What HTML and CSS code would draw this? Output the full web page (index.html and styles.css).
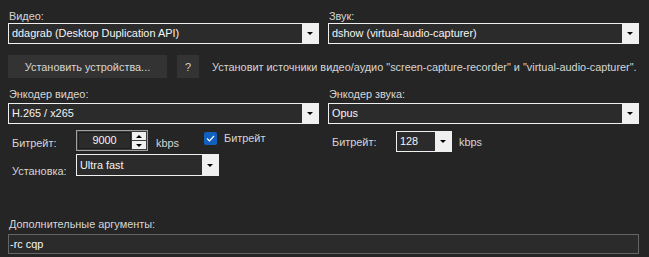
FILE: index.html
```html
<!DOCTYPE html>
<html lang="ru">
<head>
    <meta charset="UTF-8">
    <title>Настройки записи</title>
    <link rel="stylesheet" href="styles.css">
</head>
<body>
    <div class="panel">
        <div class="cols">
            <div class="field">
                <div class="label">Видео:</div>
                <div class="combo">
                    <span class="value">ddagrab (Desktop Duplication API)</span>
                    <span class="drop"><i class="arrow"></i></span>
                </div>
            </div>
            <div class="field">
                <div class="label">Звук:</div>
                <div class="combo">
                    <span class="value">dshow (virtual-audio-capturer)</span>
                    <span class="drop"><i class="arrow"></i></span>
                </div>
            </div>
        </div>

        <div class="devices">
            <button class="btn btn-devices">Установить устройства...</button>
            <button class="btn btn-help">?</button>
            <span class="hint">Установит источники видео/аудио "screen-capture-recorder" и "virtual-audio-capturer".</span>
        </div>

        <div class="cols encoders">
            <div class="field">
                <div class="label">Энкодер видео:</div>
                <div class="combo">
                    <span class="value">H.265 / x265</span>
                    <span class="drop"><i class="arrow"></i></span>
                </div>
                <div class="opt-row">
                    <span class="opt-label lbl-bitrate">Битрейт:</span>
                    <div class="spin">
                        <span class="spin-value">9000</span>
                        <span class="spin-btns">
                            <span class="spin-btn"><i class="arrow up"></i></span>
                            <span class="spin-btn"><i class="arrow"></i></span>
                        </span>
                    </div>
                    <span class="unit">kbps</span>
                    <span class="check">
                        <span class="box">
                            <svg width="9" height="7" viewBox="0 0 9 7"><path d="M1 3.5 L3.5 6 L8 1" fill="none" stroke="#fff" stroke-width="1.2"/></svg>
                        </span>
                        Битрейт
                    </span>
                </div>
                <div class="opt-row">
                    <span class="opt-label lbl-preset">Установка:</span>
                    <div class="combo preset">
                        <span class="value">Ultra fast</span>
                        <span class="drop"><i class="arrow"></i></span>
                    </div>
                </div>
            </div>
            <div class="field">
                <div class="label">Энкодер звука:</div>
                <div class="combo">
                    <span class="value">Opus</span>
                    <span class="drop"><i class="arrow"></i></span>
                </div>
                <div class="opt-row audio-row">
                    <span class="opt-label lbl-audio">Битрейт:</span>
                    <div class="combo small">
                        <span class="value">128</span>
                        <span class="drop"><i class="arrow"></i></span>
                    </div>
                    <span class="unit">kbps</span>
                </div>
            </div>
        </div>

        <div class="args">
            <div class="label">Дополнительные аргументы:</div>
            <div class="textbox">-rc cqp</div>
        </div>
    </div>
</body>
</html>
```

FILE: styles.css
```css
body {
    margin: 0;
    background-color: #252525;
    color: #d6d6d6;
    font-family: "Liberation Sans", Arial, sans-serif;
    font-size: 10.9px;
}
.panel {
    padding: 9px 10px 0 8px;
    width: 631px;
}
.cols {
    display: flex;
    gap: 9px;
}
.field {
    width: 311px;
    display: flex;
    flex-direction: column;
}
.label {
    height: 14px;
    line-height: 14px;
    padding-left: 1px;
}
.combo {
    display: flex;
    height: 21px;
    box-sizing: border-box;
    border: 1px solid #f0f0f0;
    background-color: #2b2b2b;
    color: #f4f4f4;
}
.combo .value {
    flex: 1;
    line-height: 19px;
    padding-left: 3px;
    white-space: nowrap;
}
.combo .drop {
    width: 16px;
    background-color: #f0f0f0;
    display: flex;
    align-items: center;
    justify-content: center;
}
.arrow {
    width: 0;
    height: 0;
    border-left: 3px solid transparent;
    border-right: 3px solid transparent;
    border-top: 3px solid #000;
}
.arrow.up {
    border-top: none;
    border-bottom: 3px solid #000;
}
.devices {
    display: flex;
    align-items: center;
    margin-top: 11px;
    height: 23px;
}
.btn {
    height: 23px;
    border: none;
    background-color: #333333;
    color: #d6d6d6;
    font-family: inherit;
    font-size: 10.9px;
    padding: 0;
}
.btn-devices {
    width: 159px;
}
.btn-help {
    width: 22px;
    margin-left: 10px;
}
.hint {
    margin-left: 13px;
    white-space: nowrap;
}
.encoders {
    margin-top: 9px;
}
.encoders .combo {
    margin-top: 2px;
}
.opt-row {
    display: flex;
    align-items: flex-start;
    margin-top: 6px;
}
.opt-row + .opt-row {
    margin-top: 3px;
}
.opt-label {
    width: 68px;
    padding-left: 4px;
    box-sizing: border-box;
    line-height: 14px;
}
.lbl-bitrate { margin-top: 6px; }
.lbl-preset { margin-top: 10px; }
.lbl-audio { margin-top: 4px; }
.encoders .opt-row .combo { margin-top: 0; }
.combo.preset {
    width: 143px;
    height: 22px;
}
.combo.preset .value { line-height: 20px; }
.combo.small {
    width: 56px;
}
.audio-row {
    margin-top: 7px;
}
.spin {
    display: flex;
    width: 72px;
    height: 21px;
    box-sizing: border-box;
    border: 1px solid #a0a0a0;
    padding: 1px;
    background-color: #3a3a3a;
}
.spin-value {
    flex: 1;
    background-color: #2b2b2b;
    border: 1px solid #1c1c1c;
    color: #f4f4f4;
    text-align: center;
    line-height: 15px;
}
.spin-btns {
    width: 14px;
    margin-left: 1px;
    display: flex;
    flex-direction: column;
    gap: 1px;
}
.spin-btn {
    flex: 1;
    background-color: #f0f0f0;
    display: flex;
    align-items: center;
    justify-content: center;
}
.unit {
    margin-left: 8px;
    line-height: 14px;
    margin-top: 6px;
}
.audio-row .unit {
    margin-top: 4px;
    margin-left: 7px;
}
.check {
    display: flex;
    align-items: center;
    margin-left: 25px;
    margin-top: 1px;
    gap: 7px;
    line-height: 14px;
}
.box {
    width: 13px;
    height: 13px;
    border-radius: 2px;
    background-color: #1160c0;
    display: flex;
    align-items: center;
    justify-content: center;
}
.args {
    margin-top: 39px;
}
.textbox {
    margin-top: 3px;
    height: 20px;
    box-sizing: border-box;
    border: 1px solid #646464;
    background-color: #2b2b2b;
    color: #f4f4f4;
    line-height: 18px;
    padding-left: 1px;
}
```
